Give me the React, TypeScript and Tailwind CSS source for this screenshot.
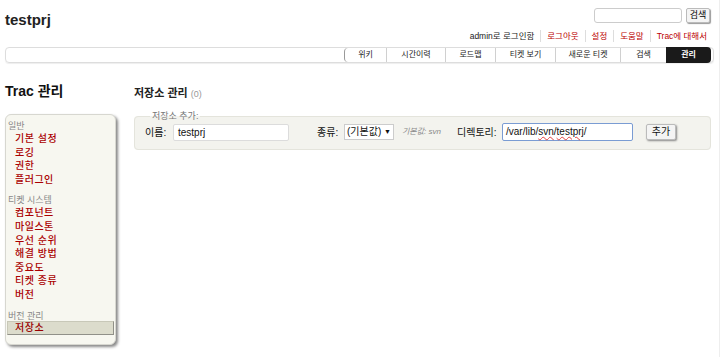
const font = "font-['Liberation_Sans','Noto_Sans_CJK_KR',sans-serif]";

const metaLinks = ["로그아웃", "설정", "도움말", "Trac에 대해서"];

const tabs = [
  { label: "위키", w: "w-[42px]" },
  { label: "시간이력", w: "w-[59px]" },
  { label: "로드맵", w: "w-[50px]" },
  { label: "티켓 보기", w: "w-[60px]" },
  { label: "새로운 티켓", w: "w-[65px]" },
  { label: "검색", w: "w-[46px]" },
];

const groups = [
  { title: "일반", items: ["기본 설정", "로깅", "권한", "플러그인"] },
  {
    title: "티켓 시스템",
    items: ["컴포넌트", "마일스톤", "우선 순위", "해결 방법", "중요도", "티켓 종류", "버전"],
  },
];

export default function App() {
  return (
    <div className={`${font} relative w-[720px] h-[357px] bg-white text-[#000] overflow-hidden border-r border-[#eeeeee]`}>
      {/* HEADER */}
      <div className="flex justify-between items-start px-[5px] pt-[8px]">
        <div className="text-[15px] font-bold leading-[18px] mt-[3px] text-[#222]">testprj</div>
        <div className="flex items-center gap-[4px] mr-[4px]">
          <div className="w-[88px] h-[15px] border border-[#cccccc] rounded-[3px] bg-white" />
          <button className="h-[15px] w-[24px] text-[9px] leading-[13px] bg-[#f4f4f4] border border-[#bbbbbb] rounded-[2px] shadow-[1px_1px_1px_#999]">
            검색
          </button>
        </div>
      </div>

      {/* META NAV */}
      <div className="flex justify-end items-center mt-[1px] mr-[12px] text-[8.5px] leading-[12px]">
        <span className="text-[#222] pr-[6px]">admin로 로그인함</span>
        {metaLinks.map((l) => (
          <span key={l} className="border-l border-[#dddddd] px-[6px] text-[#bb0000] last:pr-0">
            {l}
          </span>
        ))}
      </div>

      {/* MAIN NAV */}
      <div className="mx-[5px] mt-[5px] h-[16px] border border-[#dddddd] rounded-[4px] flex justify-end shadow-[0_1px_1px_#eeeeee]">
        {tabs.map((t) => (
          <div
            key={t.label}
            className={`${t.w} h-full border-l border-[#d0d0d0] text-[8px] leading-[14px] text-center text-[#222] first:rounded-l-[4px] first:border-l-[#999]`}
          >
            {t.label}
          </div>
        ))}
        <div className="w-[45px] -my-px h-[16px] bg-[#1a1a1a] text-white text-[8px] leading-[16px] text-center font-bold rounded-r-[4px] mr-[2px]">
          관리
        </div>
      </div>

      {/* BODY */}
      <div className="flex mt-[19px]">
        {/* SIDEBAR */}
        <div className="w-[134px] shrink-0 pl-[5px]">
          <h1 className="text-[14px] font-bold leading-[16px] mt-[1px] text-[#111]">Trac 관리</h1>
          <div className="mt-[15px] w-[111px] h-[231px] bg-[#f7f7f0] border border-[#d7d7d0] rounded-[6px] shadow-[2px_2px_3px_#888] pt-[5px]">
            {groups.map((g) => (
              <div key={g.title} className="mb-[8px]">
                <div className="px-[2px] text-[9px] leading-[12px] text-[#888888]">{g.title}</div>
                {g.items.map((i) => (
                  <div key={i} className="pl-[9px] text-[10px] leading-[13.6px] font-medium text-[#aa0000] tracking-[0.5px]">
                    {i}
                  </div>
                ))}
              </div>
            ))}
            <div className="px-[2px] text-[9px] leading-[12px] text-[#888888]">버전 관리</div>
            <div className="-mt-px mx-[1px] h-[14px] bg-[#dcdccc] border border-[#c8c8b8] border-b-[#909088] border-r-[#909088] pl-[7px] text-[10px] leading-[12px] font-medium text-[#990000] tracking-[0.5px]">
              저장소
            </div>
          </div>
        </div>

        {/* CONTENT */}
        <div className="flex-1 pr-[8px]">
          <h2 className="mt-[4px] text-[11px] leading-[14px] font-bold text-[#222]">
            저장소 관리 <span className="font-normal text-[9px] text-[#999999]">(0)</span>
          </h2>
          <fieldset className="mt-[10px] h-[39px] bg-[#f3f3ee] border border-[#e4e4dc] rounded-[4px] px-[10px] pb-[2px]">
            <legend className="ml-[5px] px-[2px] text-[9px] leading-[10px] text-[#777777] bg-transparent">저장소 추가:</legend>
            <div className="flex items-center h-[20px] mt-[1px] text-[10px] text-[#111]">
              <span className="w-[28px]">이름:</span>
              <div className="w-[116px] h-[17px] bg-white border border-[#dcdcdc] rounded-[2px] px-[4px] leading-[15px] text-[10px]">
                testprj
              </div>
              <span className="ml-[28px] w-[27px]">종류:</span>
              <div className="w-[50px] h-[16px] bg-white border border-[#cccccc] px-[2px] leading-[14px] text-[10px] flex justify-between">
                <span>(기본값)</span>
                <span className="text-[7px]">▼</span>
              </div>
              <span className="ml-[8px] text-[8px] italic text-[#888888]">기본값: svn</span>
              <span className="ml-[16px] w-[45px]">디렉토리:</span>
              <div className="w-[131px] h-[18px] bg-white border border-[#7a9cd3] rounded-[2px] px-[3px] leading-[16px] text-[10px]">
                /var/lib/<span className="underline decoration-wavy decoration-1 decoration-[#e04040] underline-offset-1">svn</span>/
                <span className="underline decoration-wavy decoration-1 decoration-[#e04040] underline-offset-1">testprj</span>/
              </div>
              <button className="ml-[13px] w-[30px] h-[16px] bg-[#f4f4f4] border border-[#bbbbbb] rounded-[2px] shadow-[1px_1px_2px_#888] text-[10px] leading-[14px]">
                추가
              </button>
            </div>
          </fieldset>
        </div>
      </div>
    </div>
  );
}
